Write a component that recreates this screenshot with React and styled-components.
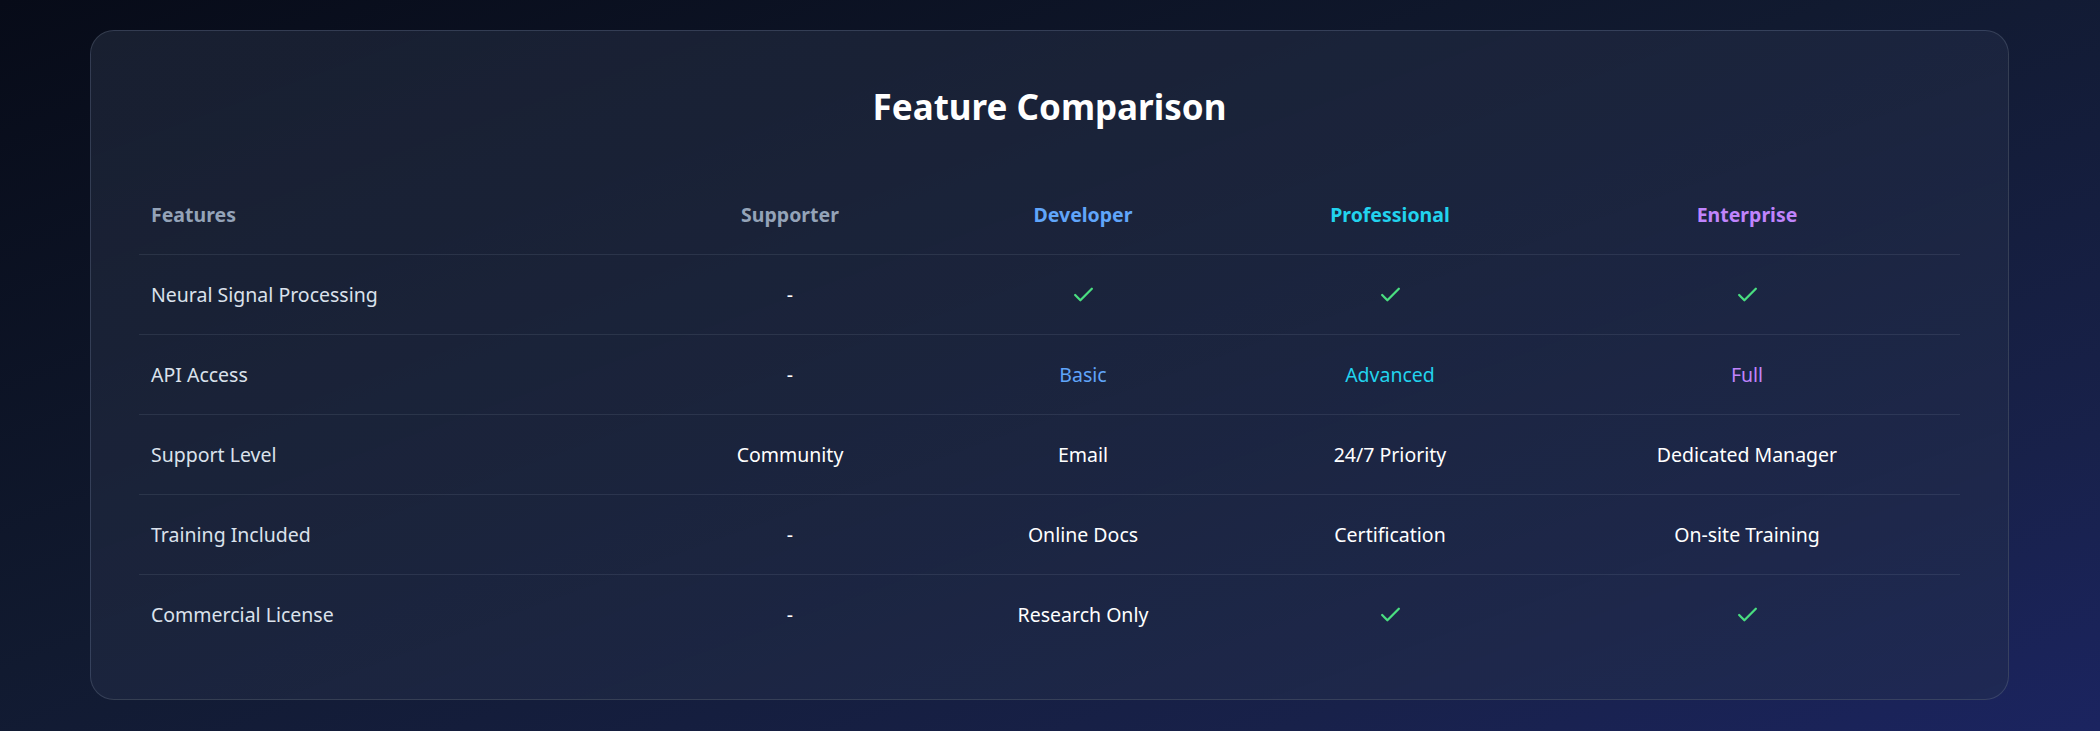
import React from "react";
import styled, { createGlobalStyle } from "styled-components";

const Global = createGlobalStyle`
  html, body { margin: 0; padding: 0; }
  body {
    font-family: "Noto Sans", "Open Sans", sans-serif;
    background: #0b1020;
  }
`;

const Page = styled.div`
  min-height: 730px;
  box-sizing: border-box;
  padding: 30px 91px 31px 90px;
  background: linear-gradient(160deg, #070b18 0%, #111a30 45%, #18214a 80%, #1b2460 100%);
`;

const Card = styled.div`
  box-sizing: border-box;
  height: 670px;
  border: 1px solid rgba(148, 163, 184, 0.22);
  border-radius: 24px;
  background: linear-gradient(160deg, rgba(30, 38, 56, 0.75), rgba(34, 45, 80, 0.6));
  padding: 50px 48px 0;
`;

const Title = styled.h2`
  margin: 0 0 41px;
  text-align: center;
  color: #fff;
  font-size: 35px;
  font-weight: 700;
  line-height: 52px;
`;

const Row = styled.div`
  display: grid;
  grid-template-columns: 520px 262px 324px 290px 424px;
  height: ${p => (p.$head ? "80px" : "79px")};
  align-items: center;
  border-bottom: ${p => (p.$last ? "none" : "1px solid rgba(148, 163, 184, 0.14)")};
`;

const Cell = styled.div`
  text-align: ${p => (p.$first ? "left" : "center")};
  padding-left: ${p => (p.$first ? "12px" : "0")};
  font-size: 19.5px;
  font-weight: ${p => (p.$head ? 700 : 400)};
  color: ${p => p.$color || (p.$first ? "#dbe2ec" : "#ffffff")};
  display: flex;
  justify-content: ${p => (p.$first ? "flex-start" : "center")};
  align-items: center;
`;

const Check = () => (
  <svg width="25" height="25" viewBox="0 0 24 24" fill="none" stroke="#4ade80" strokeWidth="2.2" strokeLinecap="round" strokeLinejoin="round">
    <path d="M4 12.5l5 5L20 6.5" />
  </svg>
);

const C = {
  dev: "#60a5fa",
  pro: "#22d3ee",
  ent: "#c084fc",
};

const rows = [
  ["Neural Signal Processing", "-", "check", "check", "check"],
  ["API Access", "-", ["Basic", C.dev], ["Advanced", C.pro], ["Full", C.ent]],
  ["Support Level", "Community", "Email", "24/7 Priority", "Dedicated Manager"],
  ["Training Included", "-", "Online Docs", "Certification", "On-site Training"],
  ["Commercial License", "-", "Research Only", "check", "check"],
];

export default function App() {
  return (
    <>
      <Global />
      <Page>
        <Card>
          <Title>Feature Comparison</Title>
          <Row $head>
            <Cell $first $head $color="#94a3b8">Features</Cell>
            <Cell $head $color="#94a3b8">Supporter</Cell>
            <Cell $head $color={C.dev}>Developer</Cell>
            <Cell $head $color={C.pro}>Professional</Cell>
            <Cell $head $color={C.ent}>Enterprise</Cell>
          </Row>
          {rows.map((r, i) => (
            <Row key={i} $last={i === rows.length - 1}>
              {r.map((v, j) => {
                if (j === 0) return <Cell key={j} $first>{v}</Cell>;
                if (v === "check") return <Cell key={j}><Check /></Cell>;
                if (Array.isArray(v)) return <Cell key={j} $color={v[1]}>{v[0]}</Cell>;
                return <Cell key={j}>{v}</Cell>;
              })}
            </Row>
          ))}
        </Card>
      </Page>
    </>
  );
}
